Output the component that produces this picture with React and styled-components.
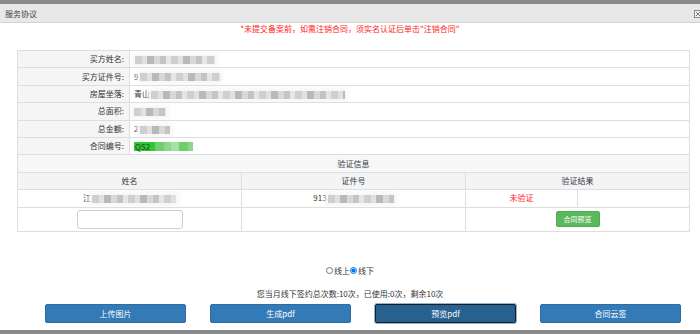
import styled, { createGlobalStyle } from 'styled-components'

const GlobalStyle = createGlobalStyle`
  html, body {
    margin: 0;
    padding: 0;
  }
  body {
    font-family: "Noto Sans CJK SC", "Noto Sans", sans-serif;
    background: #8a8a8a;
  }
`

const Screen = styled.div`
  width: 700px;
  height: 334px;
  padding: 4px 0;
  box-sizing: border-box;
  background: #8a8a8a;
  overflow: hidden;
`

const Dialog = styled.div`
  height: 326px;
  background: #fff;
  display: flex;
  flex-direction: column;
  overflow: hidden;
`

const TitleBar = styled.div`
  height: 18px;
  flex: none;
  display: flex;
  align-items: center;
  justify-content: space-between;
  padding-left: 5px;
  background: #e8e8e8;
  border-bottom: 1px solid #d2d2d2;
  font-size: 8px;
  color: #444;
`

const CloseIcon = styled.svg`
  width: 8px;
  height: 8px;
  margin-right: -2px;
  margin-top: 1px;
`

const Notice = styled.div`
  height: 11px;
  line-height: 11px;
  text-align: center;
  font-size: 8px;
  color: #ff2020;
`

const InfoTable = styled.table`
  margin: 16px 0 0 17px;
  width: 672px;
  table-layout: fixed;
  border-collapse: collapse;
  font-size: 8px;
  color: #333;

  td {
    border: 1px solid #dedede;
    padding: 0 4px;
    height: 16.4px;
    line-height: 10px;
    white-space: nowrap;
    overflow: hidden;
  }
`

const Label = styled.td`
  background: #f5f5f5;
  text-align: right;
  && { padding-right: 5px; }
`

const Value = styled.td`
  background: #fff;
  text-align: left;
`

const HeadCell = styled.td`
  background: ${p => (p.$dim ? '#f4f4f4' : '#f7f7f7')};
  text-align: center;
  color: #2f3b48;
`

const Cell = styled.td`
  text-align: center;
  color: ${p => (p.$red ? '#ff1a1a' : '#333')};
  && { height: ${p => (p.$tall ? '23px' : '16.4px')}; }
`

const Redact = styled.span`
  display: inline-block;
  vertical-align: middle;
  width: ${p => p.$w}px;
  height: 8px;
  margin-left: ${p => p.$ml || 0}px;
  background: repeating-linear-gradient(
    90deg,
    #cfcfcf 0 7px,
    #e1e1e1 7px 12px,
    #b9b9b9 12px 19px,
    #d8d8d8 19px 25px,
    #c4c4c4 25px 31px,
    #e6e6e6 31px 36px
  );
  filter: blur(0.4px);
  box-shadow: 0 0 4px 3px rgba(245, 245, 245, 0.9);
`

const Contract = styled.span`
  display: inline-flex;
  align-items: center;
  height: 9px;
  vertical-align: middle;
`

const ContractCode = styled.span`
  background: #35c435;
  color: #145214;
  padding: 0 5px 0 1px;
  line-height: 9px;
`

const ContractRest = styled.span`
  width: 38px;
  height: 9px;
  background: repeating-linear-gradient(90deg, #6fcf6f 0 9px, #8ad88a 9px 16px, #a6e0a6 16px 24px);
`

const NameInput = styled.input`
  width: 106px;
  height: 19px;
  box-sizing: border-box;
  border: 1px solid #cfcfcf;
  border-radius: 3px;
  outline: none;
`

const PreviewButton = styled.button`
  width: 44px;
  height: 16px;
  padding: 0;
  border: 1px solid #4cae4c;
  border-radius: 2px;
  background: #5cb85c;
  color: #fff;
  font-family: inherit;
  font-size: 7px;
`

const RadioRow = styled.div`
  margin-top: 34px;
  height: 10px;
  display: flex;
  justify-content: center;
  align-items: center;
  font-size: 8px;
  color: #333;
`

const RadioLabel = styled.label`
  display: flex;
  align-items: center;
`

const Radio = styled.input`
  width: 7px;
  height: 7px;
  margin: 0 1px 0 0;
`

const Quota = styled.div`
  margin-top: 13px;
  height: 10px;
  line-height: 10px;
  text-align: center;
  font-size: 8px;
  color: #333;
`

const ButtonRow = styled.div`
  margin-top: 5px;
  display: flex;
  gap: 24px;
  padding-left: 45px;
`

const ActionButton = styled.button`
  width: 141px;
  height: 19px;
  padding: 0;
  border-radius: 2px;
  border: 1px solid ${p => (p.$active ? '#0e2235' : '#2e6da4')};
  background: ${p => (p.$active ? '#286090' : '#337ab7')};
  box-shadow: ${p => (p.$active ? '0 0 0 1px #9fb2c4' : 'none')};
  color: #fff;
  font-family: inherit;
  font-size: 8px;
`

const infoRows = [
  { label: '买方姓名:', value: <Redact $w={80} $ml={1} /> },
  { label: '买方证件号:', value: <>9<Redact $w={80} $ml={2} /></> },
  { label: '房屋坐落:', value: <>青山<Redact $w={194} $ml={1} /></> },
  { label: '总面积:', value: <Redact $w={32} /> },
  { label: '总金额:', value: <>2<Redact $w={30} $ml={2} /></> },
  {
    label: '合同编号:',
    value: (
      <Contract>
        <ContractCode>QS2</ContractCode>
        <ContractRest />
      </Contract>
    ),
  },
]

const buttons = ['上传图片', '生成pdf', '预览pdf', '合同云签']

export default function App() {
  return (
    <>
      <GlobalStyle />
      <Screen>
        <Dialog>
          <TitleBar>
            <span>服务协议</span>
            <CloseIcon viewBox="0 0 8 8">
              <rect x="0.5" y="0.5" width="7" height="7" fill="#f2f2f2" stroke="#8a8a8a" />
              <path d="M2 2 L6 6 M6 2 L2 6" stroke="#777" strokeWidth="1" />
            </CloseIcon>
          </TitleBar>

          <Notice>*未提交备案前，如需注销合同，须实名认证后单击"注销合同"</Notice>

          <InfoTable>
            <colgroup>
              {[0, 1, 2, 3, 4, 5].map(i => <col key={i} style={{ width: 112 }} />)}
            </colgroup>
            <tbody>
              {infoRows.map(row => (
                <tr key={row.label}>
                  <Label>{row.label}</Label>
                  <Value colSpan={5}>{row.value}</Value>
                </tr>
              ))}
              <tr>
                <HeadCell colSpan={6}>验证信息</HeadCell>
              </tr>
              <tr>
                <HeadCell colSpan={2} $dim>姓名</HeadCell>
                <HeadCell colSpan={2} $dim>证件号</HeadCell>
                <HeadCell colSpan={2} $dim>验证结果</HeadCell>
              </tr>
              <tr>
                <Cell colSpan={2}>江<Redact $w={84} $ml={1} /></Cell>
                <Cell colSpan={2}>913<Redact $w={66} $ml={1} /></Cell>
                <Cell $red>未验证</Cell>
                <Cell />
              </tr>
              <tr>
                <Cell colSpan={2} $tall><NameInput /></Cell>
                <Cell colSpan={2} $tall />
                <Cell colSpan={2} $tall><PreviewButton>合同预览</PreviewButton></Cell>
              </tr>
            </tbody>
          </InfoTable>

          <RadioRow>
            <RadioLabel><Radio type="radio" name="mode" />线上</RadioLabel>
            <RadioLabel><Radio type="radio" name="mode" defaultChecked />线下</RadioLabel>
          </RadioRow>

          <Quota>您当月线下签约总次数:10次，已使用:0次，剩余10次</Quota>

          <ButtonRow>
            {buttons.map(b => (
              <ActionButton key={b} $active={b === '预览pdf'}>{b}</ActionButton>
            ))}
          </ButtonRow>
        </Dialog>
      </Screen>
    </>
  )
}
